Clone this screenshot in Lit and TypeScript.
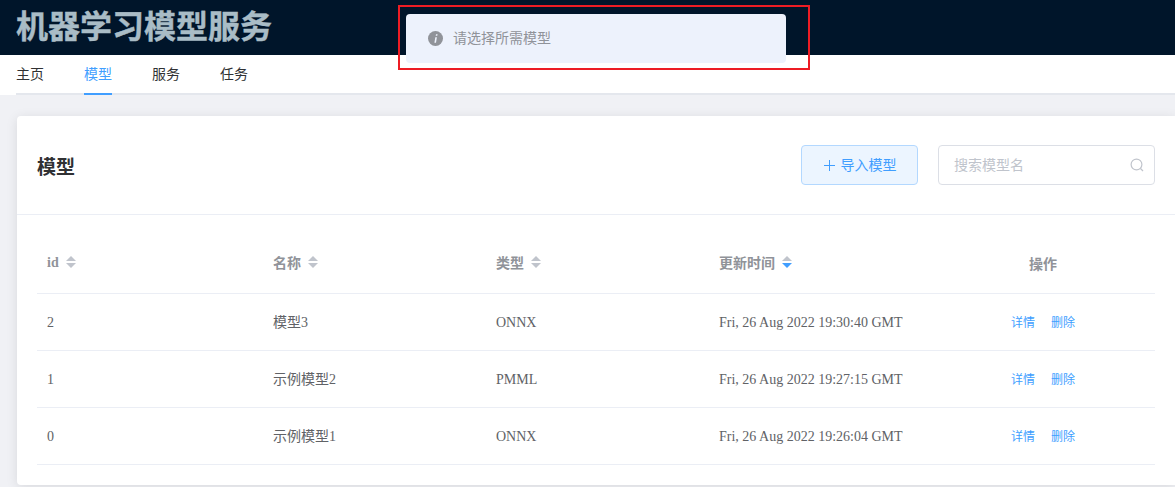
import { LitElement, html, css } from 'lit';
import { customElement } from 'lit/decorators.js';

const NAV = ['主页', '模型', '服务', '任务'];

const COLUMNS = [
  { label: 'id', sort: 'none' },
  { label: '名称', sort: 'none' },
  { label: '类型', sort: 'none' },
  { label: '更新时间', sort: 'desc' },
];

const ROWS = [
  { id: '2', name: '模型3', type: 'ONNX', time: 'Fri, 26 Aug 2022 19:30:40 GMT' },
  { id: '1', name: '示例模型2', type: 'PMML', time: 'Fri, 26 Aug 2022 19:27:15 GMT' },
  { id: '0', name: '示例模型1', type: 'ONNX', time: 'Fri, 26 Aug 2022 19:26:04 GMT' },
];

@customElement('app-root')
export class AppRoot extends LitElement {
  static styles = css`
    :host {
      display: block;
      height: 487px;
      overflow: hidden;
      position: relative;
      background: #f0f1f5;
      font-family: 'Liberation Serif', 'Noto Sans CJK SC', serif;
    }

    .topbar {
      height: 55px;
      box-sizing: border-box;
      background: #00152a;
      padding-left: 16px;
      display: flex;
      align-items: center;
    }

    .title {
      font-family: 'Liberation Sans', 'Noto Sans CJK SC', sans-serif;
      font-size: 32px;
      font-weight: 700;
      color: #a9bcc6;
      -webkit-text-stroke: 0.4px #a9bcc6;
      line-height: 55px;
      white-space: nowrap;
    }

    .nav {
      height: 40px;
      box-sizing: border-box;
      background: #fff;
      padding-left: 16px;
    }

    .nav-list {
      height: 40px;
      box-sizing: border-box;
      border-bottom: 2px solid #e4e7ed;
      display: flex;
      gap: 40px;
    }

    .nav-item {
      font-family: 'Liberation Sans', 'Noto Sans CJK SC', sans-serif;
      font-size: 14px;
      color: #303133;
      line-height: 38px;
      height: 40px;
      box-sizing: border-box;
    }

    .nav-item.active {
      color: #409eff;
      border-bottom: 2px solid #409eff;
    }

    .content {
      padding: 21px 0 0 17px;
    }

    .card {
      height: 369px;
      box-sizing: border-box;
      background: #fff;
      border-radius: 4px 0 0 4px;
      box-shadow: 0 2px 12px 0 rgba(0, 0, 0, 0.1);
    }

    .card-head {
      height: 99px;
      box-sizing: border-box;
      border-bottom: 1px solid #ebeef5;
      padding: 0 20px;
      display: flex;
      align-items: center;
    }

    .card-title {
      flex: 1;
      font-family: 'Liberation Sans', 'Noto Sans CJK SC', sans-serif;
      font-size: 19px;
      font-weight: 700;
      color: #303133;
    }

    .btn {
      width: 117px;
      height: 40px;
      box-sizing: border-box;
      margin-right: 20px;
      padding-left: 1px;
      background: #ecf5ff;
      border: 1px solid #b3d8ff;
      border-radius: 4px;
      color: #409eff;
      font-family: 'Liberation Sans', 'Noto Sans CJK SC', sans-serif;
      font-size: 14px;
      display: flex;
      align-items: center;
      justify-content: center;
      gap: 6px;
    }

    .search {
      width: 217px;
      height: 40px;
      box-sizing: border-box;
      border: 1px solid #dcdfe6;
      border-radius: 4px;
      padding: 0 10px 0 15px;
      display: flex;
      align-items: center;
      justify-content: space-between;
      font-family: 'Liberation Sans', 'Noto Sans CJK SC', sans-serif;
      font-size: 14px;
      color: #c0c4cc;
    }

    .raise {
      padding-bottom: 2px;
    }

    .table {
      margin: 0 20px;
      font-size: 14px;
      color: #606266;
    }

    .row {
      display: grid;
      grid-template-columns: 226px 223px 223px 293px 1fr;
      align-items: center;
      height: 57px;
      box-sizing: border-box;
      border-bottom: 1px solid #ebeef5;
      padding-left: 10px;
    }

    .row.header {
      height: 79px;
      padding-top: 15px;
      color: #909399;
      font-weight: 700;
    }

    .th {
      display: flex;
      align-items: center;
      gap: 7px;
    }

    .latin {
      padding-top: 2px;
    }

    .ops-label {
      padding-left: 17px;
      padding-top: 3px;
    }

    .ops {
      display: flex;
      gap: 16px;
      margin-left: -1px;
      padding-bottom: 2px;
      font-family: 'Liberation Sans', 'Noto Sans CJK SC', sans-serif;
      font-size: 12px;
      color: #409eff;
    }

    .toast {
      position: absolute;
      left: 406px;
      top: 14px;
      width: 380px;
      height: 49px;
      box-sizing: border-box;
      background: #edf2fc;
      border-radius: 4px;
      padding-left: 22px;
      display: flex;
      align-items: center;
      gap: 10px;
      font-family: 'Liberation Sans', 'Noto Sans CJK SC', sans-serif;
      font-size: 14px;
      color: #909399;
    }

    .toast svg {
      margin-bottom: 1px;
    }

    .toast span {
      padding-bottom: 4px;
    }

    .annotation {
      position: absolute;
      left: 398px;
      top: 5px;
      width: 412px;
      height: 65px;
      box-sizing: border-box;
      border: 2px solid #ed1c24;
    }
  `;

  private sortIcon(sort: string) {
    const down = sort === 'desc' ? '#409eff' : '#c0c4cc';
    return html`
      <svg width="10" height="12" viewBox="0 0 10 12">
        <path d="M5 0 10 5H0z" fill="#c0c4cc"></path>
        <path d="M0 7H10L5 12z" fill=${down}></path>
      </svg>
    `;
  }

  render() {
    return html`
      <div class="topbar"><div class="title">机器学习模型服务</div></div>
      <div class="nav">
        <div class="nav-list">
          ${NAV.map((n) => html`<div class="nav-item ${n === '模型' ? 'active' : ''}">${n}</div>`)}
        </div>
      </div>
      <div class="content">
        <div class="card">
          <div class="card-head">
            <div class="card-title">模型</div>
            <div class="btn">
              <svg width="11" height="11" viewBox="0 0 11 11">
                <path d="M5.5 0V11M0 5.5H11" stroke="currentColor" fill="none"></path>
              </svg>
              <span class="raise">导入模型</span>
            </div>
            <div class="search">
              <span class="raise">搜索模型名</span>
              <svg width="14" height="14" viewBox="0 0 14 14" fill="none" stroke="#c0c4cc" stroke-width="1.2">
                <circle cx="6.5" cy="6.5" r="5.4"></circle>
                <path d="M10.5 10.5 13 13"></path>
              </svg>
            </div>
          </div>
          <div class="table">
            <div class="row header">
              ${COLUMNS.map(
                (c) => html`<div class="th"><span class=${c.label === 'id' ? 'latin' : ''}>${c.label}</span>${this.sortIcon(c.sort)}</div>`
              )}
              <div class="ops-label">操作</div>
            </div>
            ${ROWS.map(
              (r) => html`
                <div class="row">
                  <div class="latin">${r.id}</div>
                  <div class="raise">${r.name}</div>
                  <div class="latin">${r.type}</div>
                  <div class="latin">${r.time}</div>
                  <div class="ops"><span>详情</span><span>删除</span></div>
                </div>
              `
            )}
          </div>
        </div>
      </div>
      <div class="toast">
        <svg width="15" height="15" viewBox="0 0 15 15">
          <circle cx="7.5" cy="7.5" r="7.5" fill="#909399"></circle>
          <path d="M8 3.2h1.6l-.3 1.6H7.7zM7.3 6.2h1.6L8 11.8H6.4z" fill="#edf2fc"></path>
        </svg>
        <span>请选择所需模型</span>
      </div>
      <div class="annotation"></div>
    `;
  }
}
